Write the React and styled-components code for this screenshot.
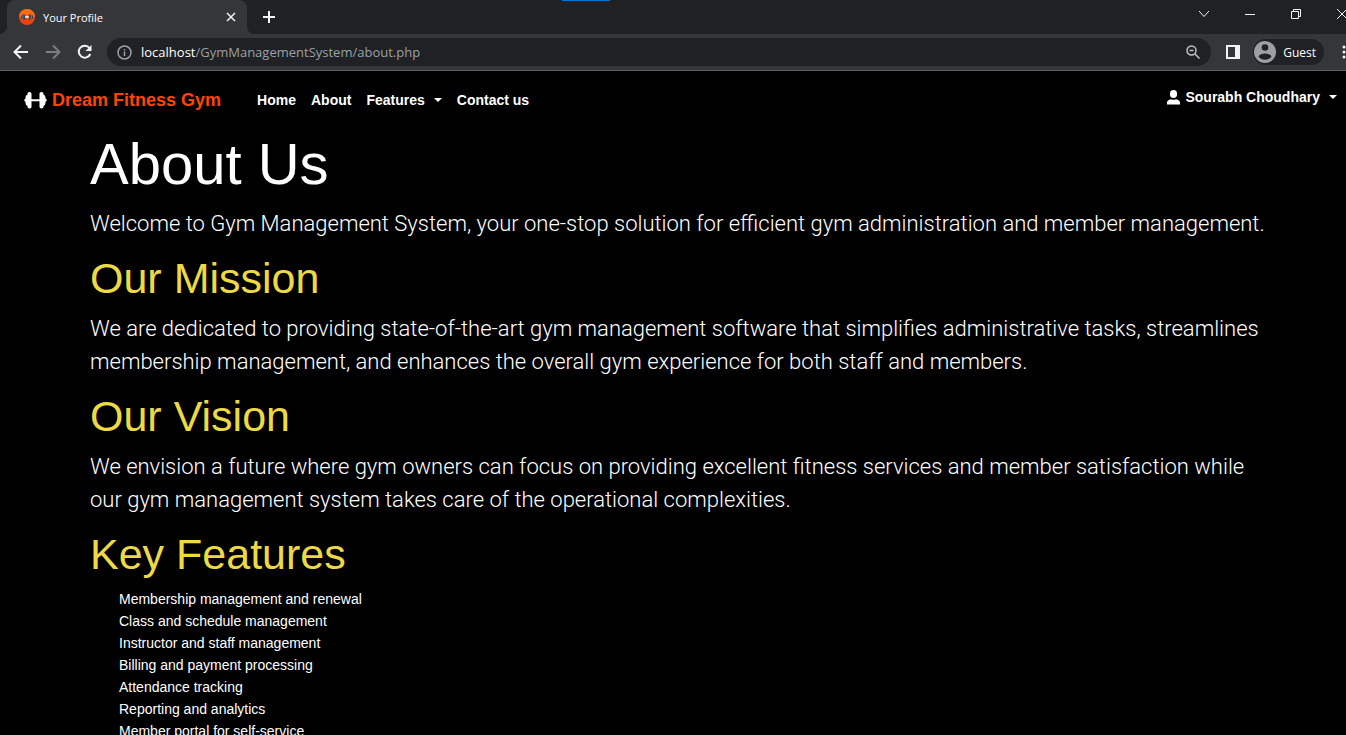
import React from "react";
import styled, { createGlobalStyle } from "styled-components";

const GlobalStyle = createGlobalStyle`
  *, *::before, *::after { box-sizing: border-box; }
  body { margin: 0; background: #000; }
  button, input { font: inherit; color: inherit; border: 0; background: none; padding: 0; margin: 0; }
  h1, h2, p, ul { margin: 0; padding: 0; }
  svg { display: block; flex: none; }
`;

const Window = styled.div`
  display: flex;
  flex-direction: column;
  height: 100vh;
  overflow: hidden;
  background: #000;
  color: #fff;
  font-family: "Liberation Sans", Arial, sans-serif;
`;

const Chrome = styled.header`
  flex: none;
  overflow: hidden;
  background: #35363a;
  border-bottom: 1px solid #5f6064;
  font-family: "Open Sans", "Noto Sans", sans-serif;
`;

const TabStrip = styled.div`
  position: relative;
  display: flex;
  height: 34px;
  padding-left: 7px;
  background: #202124;
`;

const LoadAccent = styled.span`
  position: absolute;
  top: 0;
  left: 562px;
  width: 48px;
  height: 1px;
  background: #0078d7;
`;

const Tab = styled.div`
  position: relative;
  display: flex;
  align-items: center;
  gap: 8px;
  width: 240px;
  padding: 0 9px 0 12px;
  border-radius: 8px 8px 0 0;
  background: #35363a;
  font-size: 11px;
  color: #fff;

  &::before,
  &::after {
    content: "";
    position: absolute;
    bottom: 0;
    width: 8px;
    height: 8px;
  }
  &::before {
    right: 100%;
    background: radial-gradient(circle at 0 0, #202124 8px, #35363a 8px);
  }
  &::after {
    left: 100%;
    background: radial-gradient(circle at 100% 0, #202124 8px, #35363a 8px);
  }
`;

const TabTitle = styled.span`
  flex: 1;
  white-space: nowrap;
`;

const IconButton = styled.button`
  display: flex;
  flex: none;
  align-items: center;
  justify-content: center;
  width: ${(p) => p.$w || 32}px;
  height: ${(p) => p.$h || 28}px;
  color: ${(p) => p.$color || "#f1f3f4"};
`;

const NewTab = styled(IconButton)`
  margin: 3px 0 0 8px;
`;

const WindowControls = styled.div`
  display: flex;
  margin: 0 -19px 0 auto;
`;

const Toolbar = styled.div`
  display: flex;
  align-items: center;
  height: 36px;
  padding-left: 5px;
`;

const AddressBar = styled.form`
  display: flex;
  flex: 1;
  align-items: center;
  height: 28px;
  margin: 0 6px 0 6px;
  padding: 0 8px 0 10px;
  border-radius: 14px;
  background: #202124;
`;

const Address = styled.div`
  flex: 1;
  padding-left: 9px;
  font-size: 13px;
  white-space: nowrap;
  color: #9aa0a6;
`;

const Host = styled.span`
  color: #fff;
`;

const Profile = styled.button`
  display: flex;
  flex: none;
  align-items: center;
  gap: 7px;
  height: 26px;
  margin-left: 4px;
  padding: 0 8px 0 1px;
  border-radius: 13px;
  background: #202124;
  font-size: 12px;
  color: #fff;
`;

const MenuButton = styled(IconButton)`
  margin: 0 -10px 0 8px;
`;

const Viewport = styled.div`
  flex: 1;
  min-height: 0;
  overflow-y: auto;
  scrollbar-width: none;
`;

const Navbar = styled.nav`
  display: flex;
  align-items: center;
  height: 58px;
  padding: 0 9px 0 24px;
  font-size: 14px;
  font-weight: 700;
`;

const Brand = styled.a`
  display: flex;
  align-items: center;
  gap: 5px;
  margin-right: 36px;
  font-size: 18px;
  color: #ff4500;
  text-decoration: none;
`;

const NavLinks = styled.div`
  display: flex;
  gap: 15px;
`;

const NavLink = styled.a`
  display: flex;
  align-items: center;
  color: #fff;
  text-decoration: none;
`;

const MenuToggle = styled.button`
  display: flex;
  align-items: center;
  gap: 9px;
`;

const UserToggle = styled(MenuToggle)`
  margin: 0 0 6px auto;
`;

const UserName = styled.span`
  display: flex;
  align-items: center;
  gap: 5px;
`;

const Caret = styled.span`
  border: 4px solid transparent;
  border-top-color: #fff;
  border-bottom: 0;
`;

const Content = styled.main`
  width: 100%;
  padding: 0 76px 0 90px;
`;

const Title = styled.h1`
  margin-bottom: 8px;
  font-size: 58px;
  font-weight: 400;
  line-height: 70px;
`;

const Heading = styled.h2`
  margin-bottom: 8px;
  font-size: 43px;
  font-weight: 400;
  line-height: 52px;
  color: #ecd944;
`;

const Lead = styled.p`
  margin-bottom: 12px;
  font-family: Roboto, sans-serif;
  font-size: 22px;
  font-weight: 300;
  line-height: 33px;
`;

const FeatureList = styled.ul`
  padding-left: 29px;
  list-style: none;
  font-size: 14px;
  line-height: 22px;
`;

const Stroke = ({ size = 16, width = 2, children }) => (
  <svg width={size} height={size} viewBox={`0 0 ${size} ${size}`} fill="none" stroke="currentColor" strokeWidth={width} aria-hidden="true">
    {children}
  </svg>
);

const Favicon = () => (
  <svg width="16" height="16" viewBox="0 0 16 16" aria-hidden="true">
    <circle cx="8" cy="8" r="8" fill="#e8440c" />
    <path d="M0 8a8 8 0 0 1 16 0z" fill="#ff6a13" />
    <path d="M2 6.500h1.200V5.500h3v5h-3V9.500H2zM9.800 5.500h3v1H14v3h-1.200v1h-3z" fill="#3c4248" />
    <path d="M3.200 5.500h1v5h-1zM11.800 5.500h1v5h-1z" fill="#78828a" />
    <path d="M6.200 7.200h3.600v1.600H6.200z" fill="#fff" />
  </svg>
);

const Dumbbell = () => (
  <svg width="23" height="17" viewBox="0 0 23 17" fill="#fff" aria-hidden="true">
    <rect x="3.500" y="0" width="4" height="16.500" rx="1.800" />
    <rect x="15.500" y="0" width="4" height="16.500" rx="1.800" />
    <path d="M4 2.500v11.500L2 13Q1.500 11 1.300 9.500L.3 9V7.500l1-.5Q1.500 5 2 3.500zM19 2.500v11.500l2-1Q21.500 11 21.700 9.500l1-.5V7.500l-1-.5Q21.500 5 21 3.500zM7 7.300h9v2H7z" />
  </svg>
);

const User = () => (
  <svg width="13" height="15" viewBox="0 0 13 15" fill="#fff" aria-hidden="true">
    <ellipse cx="6.500" cy="4" rx="3.600" ry="4" />
    <path d="M0 14.500v-2C.2 10.500 1.500 10 4 9.200c1.600.7 3.400.7 5 0 2.500.8 3.800 1.300 4 3.300v2z" />
  </svg>
);

const Avatar = () => (
  <svg width="22" height="22" viewBox="0 0 22 22" aria-hidden="true">
    <circle cx="11" cy="11" r="11" fill="#9aa0a6" />
    <circle cx="11" cy="6.500" r="3.300" fill="#202124" />
    <path d="M4.500 15.500c1-2.200 4-3 6.500-3s5.500.8 6.500 3c-1.500 2.200-4 3.300-6.500 3.300s-5-1.100-6.500-3.300z" fill="#202124" />
  </svg>
);

const sections = [
  {
    heading: "Our Mission",
    text: "We are dedicated to providing state-of-the-art gym management software that simplifies administrative tasks, streamlines membership management, and enhances the overall gym experience for both staff and members.",
  },
  {
    heading: "Our Vision",
    text: "We envision a future where gym owners can focus on providing excellent fitness services and member satisfaction while our gym management system takes care of the operational complexities.",
  },
];

const features = [
  "Membership management and renewal",
  "Class and schedule management",
  "Instructor and staff management",
  "Billing and payment processing",
  "Attendance tracking",
  "Reporting and analytics",
  "Member portal for self-service",
];

function BrowserChrome() {
  return (
    <Chrome>
      <TabStrip>
        <LoadAccent />
        <Tab>
          <Favicon />
          <TabTitle>Your Profile</TabTitle>
          <IconButton $w={14} $h={14} aria-label="Close tab">
            <Stroke size={10} width={1.5}><path d="M1 1l8 8M9 1L1 9" /></Stroke>
          </IconButton>
        </Tab>
        <NewTab $w={28} aria-label="New tab">
          <Stroke size={12}><path d="M6 0v12M0 6h12" /></Stroke>
        </NewTab>
        <WindowControls>
          <IconButton $w={46} aria-label="Search tabs">
            <Stroke size={12} width={1}><path d="M1 3l5 5.500L11 3" /></Stroke>
          </IconButton>
          <IconButton $w={46} aria-label="Minimize">
            <Stroke size={10} width={1}><path d="M0 5.500h10" /></Stroke>
          </IconButton>
          <IconButton $w={46} aria-label="Restore">
            <Stroke size={10} width={1}><path d="M.5 2.500h7v7h-7zM2.500 2.500v-2h7v7h-2" /></Stroke>
          </IconButton>
          <IconButton $w={46} aria-label="Close window">
            <Stroke size={10} width={1}><path d="M0 0l10 10M10 0L0 10" /></Stroke>
          </IconButton>
        </WindowControls>
      </TabStrip>
      <Toolbar>
        <IconButton aria-label="Back">
          <Stroke><path d="M15 8H2M8 1.500L1.500 8 8 14.500" /></Stroke>
        </IconButton>
        <IconButton $color="#7d7e82" aria-label="Forward">
          <Stroke><path d="M1 8h13M8 1.500L14.500 8 8 14.500" /></Stroke>
        </IconButton>
        <IconButton aria-label="Reload">
          <Stroke>
            <path d="M13.300 10A6 6 0 1 1 12.500 4" />
            <path d="M14.500 1v6h-6z" fill="currentColor" stroke="none" />
          </Stroke>
        </IconButton>
        <AddressBar>
          <IconButton type="button" $w={15} $color="#9aa0a6" aria-label="Site information">
            <Stroke size={15} width={1.5}>
              <circle cx="7.500" cy="7.500" r="6.500" />
              <path d="M7.500 6.500v4.500M7.500 4v1.500" />
            </Stroke>
          </IconButton>
          <Address><Host>localhost</Host>/GymManagementSystem/about.php</Address>
          <IconButton type="button" $w={20} $color="#bdc1c6" aria-label="Zoom">
            <Stroke size={14} width={1.5}>
              <circle cx="5.500" cy="5.500" r="4.500" />
              <path d="M9 9l4.500 4.500M3.500 5.500h4" />
            </Stroke>
          </IconButton>
        </AddressBar>
        <IconButton aria-label="Side panel">
          <Stroke size={14}>
            <path d="M1 1h12v12H1z" />
            <path d="M9 1h4v12H9z" fill="currentColor" stroke="none" />
          </Stroke>
        </IconButton>
        <Profile><Avatar />Guest</Profile>
        <MenuButton $w={24} aria-label="Browser menu">
          <svg width="4" height="14" viewBox="0 0 4 14" fill="currentColor" aria-hidden="true">
            <circle cx="2" cy="2" r="1.500" />
            <circle cx="2" cy="7" r="1.500" />
            <circle cx="2" cy="12" r="1.500" />
          </svg>
        </MenuButton>
      </Toolbar>
    </Chrome>
  );
}

export default function App() {
  return (
    <Window>
      <GlobalStyle />
      <BrowserChrome />
      <Viewport>
        <Navbar>
          <Brand href="#home"><Dumbbell />Dream Fitness Gym</Brand>
          <NavLinks>
            <NavLink href="#home">Home</NavLink>
            <NavLink href="#about">About</NavLink>
            <MenuToggle>Features<Caret /></MenuToggle>
            <NavLink href="#contact">Contact us</NavLink>
          </NavLinks>
          <UserToggle><UserName><User />Sourabh Choudhary</UserName><Caret /></UserToggle>
        </Navbar>
        <Content>
          <Title>About Us</Title>
          <Lead>Welcome to Gym Management System, your one-stop solution for efficient gym administration and member management.</Lead>
          {sections.map((s) => (
            <section key={s.heading}>
              <Heading>{s.heading}</Heading>
              <Lead>{s.text}</Lead>
            </section>
          ))}
          <Heading>Key Features</Heading>
          <FeatureList>
            {features.map((f) => <li key={f}>{f}</li>)}
          </FeatureList>
        </Content>
      </Viewport>
    </Window>
  );
}
